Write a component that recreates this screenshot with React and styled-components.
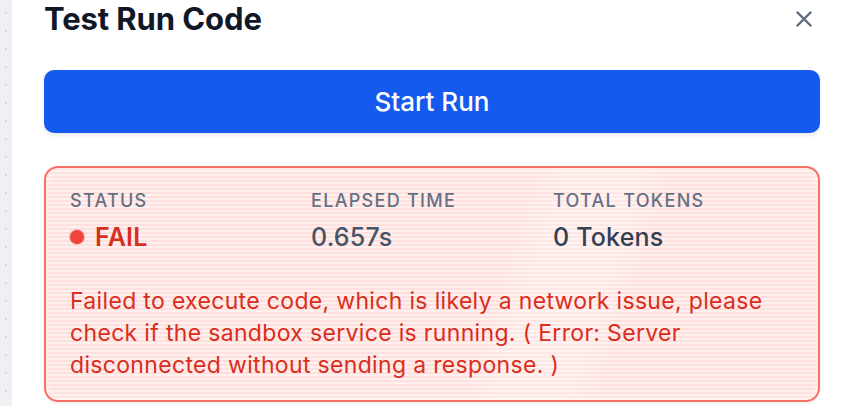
import React from "react";
import styled, { createGlobalStyle } from "styled-components";

const Global = createGlobalStyle`
  html, body { margin: 0; padding: 0; background: #fff; }
  body { font-family: Inter, "Noto Sans", sans-serif; -webkit-font-smoothing: antialiased; }
`;

const Page = styled.div`
  display: flex;
  width: 842px;
  height: 406px;
  overflow: hidden;
`;

const Backdrop = styled.div`
  width: 12px;
  flex: none;
  background-color: #eef0f4;
  background-image: radial-gradient(circle, #d6d9e0 1px, transparent 1.4px);
  background-size: 12px 18px;
  background-position: 0 4px;
`;

const Panel = styled.div`
  flex: 1;
  background: #fff;
  display: flex;
  flex-direction: column;
  padding: 0 22px 0 32px;
`;

const Header = styled.div`
  display: flex;
  align-items: center;
  justify-content: space-between;
  height: 38px;
`;

const Title = styled.h1`
  margin: 0;
  font-size: 31px;
  font-weight: 700;
  color: #101828;
  letter-spacing: -0.1px;
  line-height: 38px;
`;

const Close = styled.button`
  border: 0;
  background: none;
  padding: 0;
  width: 24px;
  height: 24px;
  display: flex;
  align-items: center;
  justify-content: center;
  margin-right: 4px;
`;

const RunButton = styled.button`
  margin-top: 32px;
  height: 63px;
  border: 0;
  border-radius: 10px;
  background: #155aef;
  color: #fff;
  font-family: Inter, sans-serif;
  font-size: 26px;
  font-weight: 500;
  box-shadow: 0 2px 4px rgba(16, 24, 40, 0.12);
`;

const Card = styled.div`
  margin-top: 33px;
  height: 236px;
  box-sizing: border-box;
  border: 2px solid #f97066;
  border-radius: 14px;
  padding: 21px 24px 0 24px;
  box-shadow: 0 1px 3px rgba(16, 24, 40, 0.08), inset 0 0 6px rgba(255, 255, 255, 0.6);
  background:
    linear-gradient(108deg, transparent 58%, rgba(255,255,255,0.22) 62%, rgba(255,255,255,0.22) 70%, transparent 74%),
    repeating-linear-gradient(180deg, #fee1de 0px, #fee1de 2px, #fff0ee 2px, #fff0ee 4px);
  overflow: hidden;
`;

const Stats = styled.div`
  display: grid;
  grid-template-columns: 241px 242px 1fr;
`;

const Stat = styled.div`
  display: flex;
  flex-direction: column;
  gap: 8px;
`;

const Label = styled.div`
  font-size: 18px;
  font-weight: 500;
  color: #667085;
  letter-spacing: 1.3px;
  line-height: 24px;
`;

const Value = styled.div`
  display: flex;
  align-items: center;
  gap: 11px;
  font-size: 25px;
  font-weight: ${(p) => (p.$fail ? 600 : 500)};
  color: ${(p) => p.$color};
  letter-spacing: 0.2px;
  line-height: 32px;
`;

const Dot = styled.span`
  flex: none;
  display: block;
  width: 14px;
  height: 14px;
  border-radius: 50%;
  background: #f04438;
  box-shadow: 0 0 0 1px rgba(217, 45, 32, 0.25);
`;

const Message = styled.p`
  margin: 32px 0 0;
  font-size: 23px;
  line-height: 32px;
  letter-spacing: 0.33px;
  color: #d92d20;
`;

export default function App() {
  return (
    <>
      <Global />
      <Page>
        <Backdrop />
        <Panel>
          <Header>
            <Title>Test Run Code</Title>
            <Close aria-label="close">
              <svg width="16" height="16" viewBox="0 0 16 16" fill="none">
                <path d="M1.5 1.5L14.5 14.5M14.5 1.5L1.5 14.5" stroke="#5d6b82" strokeWidth="2.4" strokeLinecap="round" />
              </svg>
            </Close>
          </Header>
          <RunButton>Start Run</RunButton>
          <Card>
            <Stats>
              <Stat>
                <Label>STATUS</Label>
                <Value $fail $color="#d92d20">
                  <Dot />
                  FAIL
                </Value>
              </Stat>
              <Stat>
                <Label>ELAPSED TIME</Label>
                <Value $color="#475467">0.657s</Value>
              </Stat>
              <Stat>
                <Label>TOTAL TOKENS</Label>
                <Value $color="#344054">0 Tokens</Value>
              </Stat>
            </Stats>
            <Message>
              Failed to execute code, which is likely a network issue, please check if the sandbox service is running. ( Error: Server disconnected without sending a response. )
            </Message>
          </Card>
        </Panel>
      </Page>
    </>
  );
}
